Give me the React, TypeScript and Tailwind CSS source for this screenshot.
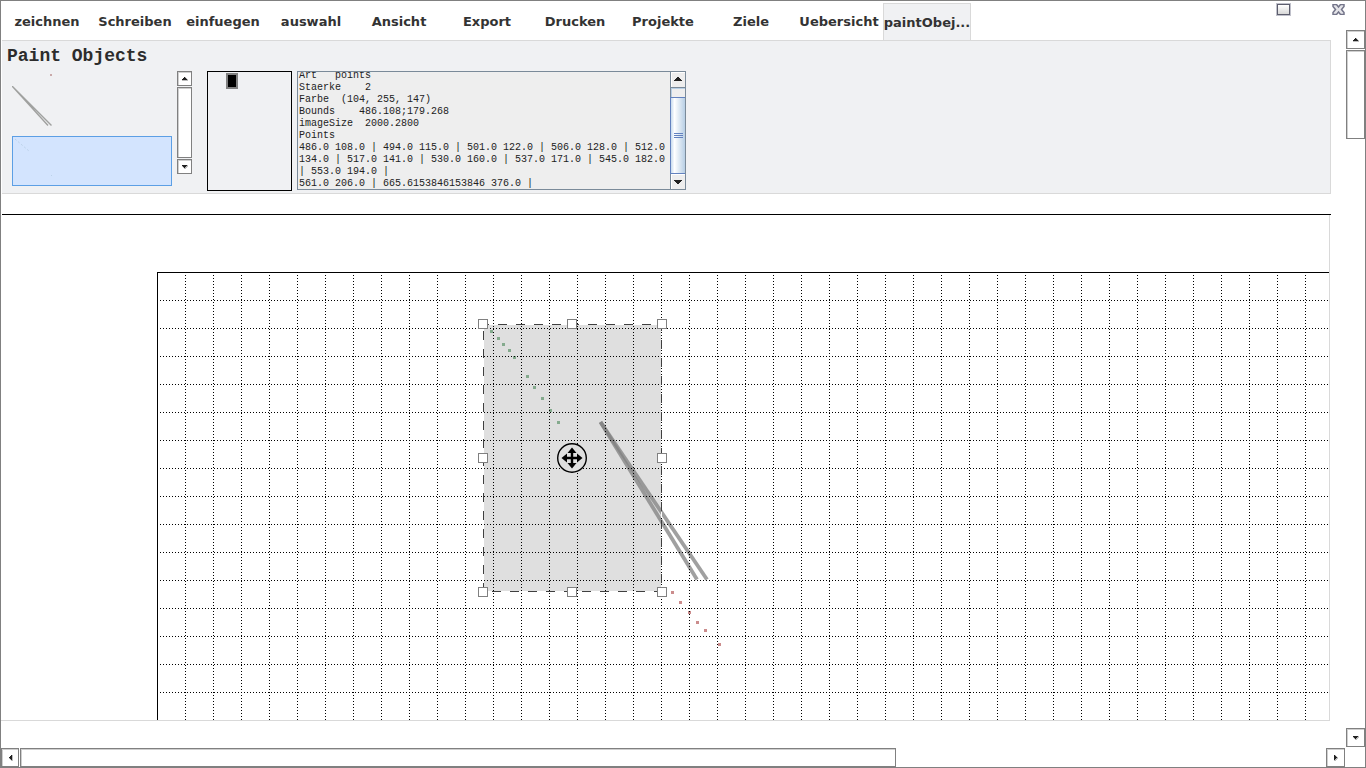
import { useLayoutEffect, useRef, useState } from "react";

const TABS = [
  "zeichnen",
  "Schreiben",
  "einfuegen",
  "auswahl",
  "Ansicht",
  "Export",
  "Drucken",
  "Projekte",
  "Ziele",
  "Uebersicht",
  "paintObej...",
];

const INFO = [
  "Art   points",
  "Staerke    2",
  "Farbe  (104, 255, 147)",
  "Bounds    486.108;179.268",
  "imageSize  2000.2800",
  "Points",
  "486.0 108.0 | 494.0 115.0 | 501.0 122.0 | 506.0 128.0 | 512.0",
  "134.0 | 517.0 141.0 | 530.0 160.0 | 537.0 171.0 | 545.0 182.0",
  "| 553.0 194.0 |",
  "561.0 206.0 | 665.6153846153846 376.0 |",
].join("\n");

type Direction = "up" | "down" | "left" | "right";

const ARROWS: Record<Direction, string> = {
  up: "M2 6V5h1V4h1V3h1v1h1v1h1v1z",
  down: "M2 3v1h1v1h1v1h1V5h1V4h1V3z",
  left: "M6 2v5H5V6H4V5H3V4h1V3h1V2z",
  right: "M3 2v5h1V6h1V5h1V4H5V3H4V2z",
};

function Arrow({ dir }: { dir: Direction }) {
  return (
    <svg width="9" height="9" viewBox="0 0 9 9" shapeRendering="crispEdges">
      <path d={ARROWS[dir]} fill="#202020" stroke="#202020" strokeOpacity="0.3" />
    </svg>
  );
}

function ScrollButton({ dir, size }: { dir: Direction; size: string }) {
  return (
    <button
      aria-label={`Scroll ${dir}`}
      className={`flex shrink-0 items-center justify-center border border-[#808080] bg-white shadow-[inset_1px_1px_0_#cfcfcf] ${size}`}
    >
      <Arrow dir={dir} />
    </button>
  );
}

function Tabs() {
  const [active, setActive] = useState(TABS.length - 1);
  return (
    <div className="flex h-10 shrink-0 pt-[2px] pl-[2px]">
      <div role="tablist" className="flex">
        {TABS.map((tab, i) => (
          <button
            key={tab}
            role="tab"
            aria-selected={i === active}
            onClick={() => setActive(i)}
            className={`flex h-[38px] w-[88px] shrink-0 items-center justify-center border text-[13px] font-bold whitespace-nowrap text-[#333333] ${
              i === active
                ? "border-[#d9d9d9] border-b-[#f0f1f3] bg-[#f0f1f3] pt-px"
                : "border-transparent"
            }`}
          >
            {tab}
          </button>
        ))}
      </div>
      <button aria-label="Maximize" className="mr-10 ml-auto flex h-[14px]">
        <svg width="15" height="13" viewBox="0 0 15 13">
          <defs>
            <linearGradient id="maxFill" x1="0" y1="0" x2="0" y2="1">
              <stop offset="0" stopColor="#ffffff" />
              <stop offset="1" stopColor="#d8d8d8" />
            </linearGradient>
          </defs>
          <rect width="15" height="13" fill="#c0c1cb" />
          <rect x="1" y="1" width="13" height="11" fill="#5c5d6d" />
          <rect x="2" y="2" width="11" height="9" fill="url(#maxFill)" />
        </svg>
      </button>
    </div>
  );
}

function ObjectList() {
  return (
    <div className="flex h-[115px] gap-[5px]">
      <ul className="flex w-40 flex-col justify-end overflow-hidden">
        <li className="h-[50px] shrink-0">
          <svg width="160" height="50">
            <rect x="38" y="38" width="2" height="2" fill="#c9a9a9" />
          </svg>
        </li>
        <li className="h-[50px] shrink-0">
          <svg width="160" height="50" fill="none" stroke="#a0a19f" strokeWidth="1.4">
            <path d="M0 0 36 39.500M0 0 39.500 39.500" />
          </svg>
        </li>
        <li className="h-[50px] shrink-0 border border-[#5c9fe5] bg-[#d3e4fe]">
          <svg width="158" height="48" stroke="#bcd2e9">
            <path d="M2 2 16 14" strokeDasharray="2 2" />
            <path d="M38 38.500h1" />
          </svg>
        </li>
      </ul>
      <div className="flex flex-col gap-px">
        <ScrollButton dir="up" size="h-[15px] w-[15px]" />
        <div className="h-[71px] w-[15px] border border-[#808080] bg-white shadow-[inset_1px_1px_0_#cfcfcf]" />
        <ScrollButton dir="down" size="h-[15px] w-[15px]" />
      </div>
    </div>
  );
}

function InfoPanel() {
  const ref = useRef<HTMLTextAreaElement>(null);
  useLayoutEffect(() => {
    if (ref.current) ref.current.scrollTop = 2;
  }, []);
  return (
    <div className="ml-[5px] flex h-[119px] w-[389px] border border-[#7a8a99] bg-[#eeeeee]">
      <textarea
        ref={ref}
        readOnly
        aria-label="Object properties"
        value={INFO}
        className="block h-full min-w-0 flex-1 resize-none overflow-hidden bg-transparent pl-px font-['Liberation_Mono',monospace] text-[10px] leading-3 whitespace-pre text-[#222222] outline-none"
      />
      <div className="flex w-[15px] flex-col border-l border-[#7a8a99]">
        <button
          aria-label="Scroll text up"
          className="flex h-4 items-center justify-center border-b border-[#7a8a99] pb-px shadow-[inset_1px_1px_0_#ffffff]"
        >
          <svg width="8" height="4" shapeRendering="crispEdges">
            <path d="M0 4V3h1V2h1V1h1V0h2v1h1v1h1v1h1v1z" fill="#222222" />
          </svg>
        </button>
        <div className="h-[9px] border-t border-l border-[#b8cfe5]" />
        <div className="-ml-px flex flex-1 flex-col items-center justify-center gap-px border border-r-0 border-[#6382bf] bg-linear-to-r from-[#c8dbee] via-white via-25% to-[#b8cfe5]">
          <span className="h-px w-[9px] bg-[#6382bf]" />
          <span className="h-px w-[9px] bg-[#6382bf]" />
          <span className="h-px w-[9px] bg-[#6382bf]" />
        </div>
        <button
          aria-label="Scroll text down"
          className="flex h-[15px] items-center justify-center shadow-[inset_1px_1px_0_#ffffff]"
        >
          <svg width="8" height="4" shapeRendering="crispEdges">
            <path d="M0 0v1h1v1h1v1h1v1h2V3h1V2h1V1h1V0z" fill="#222222" />
          </svg>
        </button>
      </div>
    </div>
  );
}

function Ribbon() {
  return (
    <section className="-mt-px ml-px h-[154px] shrink-0 border-t border-r border-b border-[#d9d9d9] bg-[#f0f1f3] pl-[5px]">
      <h1 className="h-[30px] pt-[3px] font-['Liberation_Mono',monospace] text-[18px] leading-6 font-bold text-[#2c2c2c]">
        Paint Objects
      </h1>
      <div className="flex items-start pl-[5px]">
        <ObjectList />
        <div className="ml-[15px] h-30 w-[85px] border border-black pt-px pl-[18px]">
          <div className="h-4 w-3 border-2 border-[#808080] bg-black" />
        </div>
        <InfoPanel />
      </div>
    </section>
  );
}

const GREEN = [
  [333, 58], [340, 65], [345, 71], [351, 77], [356, 84],
  [369, 103], [376, 114], [384, 125], [392, 137], [400, 149],
];
const RED = [[514, 319], [522, 329], [531, 339], [539, 349], [547, 357], [561, 371]];
const HANDLES = [
  [326, 52], [415, 52], [505, 52],
  [326, 186], [505, 186],
  [326, 320], [415, 320], [505, 320],
];
const PAGE_W = 2000;
const PAGE_H = 2800;
const CELL = 28;

function Drawing() {
  const cols = Array.from({ length: Math.floor(PAGE_W / CELL) }, (_, i) => (i + 1) * CELL);
  const rows = Array.from({ length: Math.floor(PAGE_H / CELL) }, (_, i) => (i + 1) * CELL);
  return (
    <svg className="block h-full w-full" role="img" aria-label="Drawing">
      <g transform="translate(156 57)">
        <rect x="327" y="53" width="177" height="266" fill="#dfdfdf" />
        <g stroke="#808080" strokeOpacity="0.75" strokeWidth="3.800" fill="none">
          <path d="M443.500 150 540 307.500" />
          <path d="M443.500 150 550 307.500" />
        </g>
        <g shapeRendering="crispEdges">
          {GREEN.map(([x, y]) => (
            <rect key={x} x={x} y={y} width="3" height="3" fill="#84aa8d" />
          ))}
          {RED.map(([x, y]) => (
            <rect key={x} x={x} y={y} width="3" height="3" fill="#cb8c8c" />
          ))}
          <g stroke="#000000" transform="translate(.5 .5)" fill="none">
            <path d={`M0 ${PAGE_H}V0H${PAGE_W}`} />
            <g strokeDasharray="1 2">
              {cols.map((x) => (
                <path key={x} d={`M${x} 2.500V${PAGE_H}`} />
              ))}
              {rows.map((y) => (
                <path key={y} d={`M2.500 ${y}H${PAGE_W}`} />
              ))}
            </g>
          </g>
          <path d="M504.500 240v6" stroke="#ffffff" />
          <g stroke="#404040" strokeDasharray="9 9">
            <path d="M323 52.500H504" />
            <path d="M335 319.500H504" />
            <path d="M326.500 59V320" />
            <path d="M504.500 50V320" />
          </g>
          {HANDLES.map(([x, y]) => (
            <rect
              key={`${x}-${y}`}
              x={x - 4.5}
              y={y - 4.5}
              width="9"
              height="9"
              fill="#ffffff"
              stroke="#808080"
            />
          ))}
        </g>
        <g transform="translate(415 186)">
          <circle r="14.300" fill="#dfdfdf" stroke="#000000" strokeWidth="1.400" />
          <path
            d="M0-10.500 4.500-5H1.200V-1.200H5V-4.500L10.500 0 5 4.500V1.200H1.200V5H4.500L0 10.500-4.500 5H-1.200V1.200H-5V4.500L-10.500 0-5-4.500V-1.200H-1.200V-5H-4.500Z"
            fill="#000000"
          />
        </g>
      </g>
    </svg>
  );
}

export default function App() {
  return (
    <div className="flex h-screen flex-col overflow-hidden border border-[#808080] bg-white font-['DejaVu_Sans',sans-serif]">
      <div className="flex min-h-0 flex-1">
        <main className="flex min-w-0 flex-1 flex-col">
          <Tabs />
          <Ribbon />
          <div className="mt-5 ml-px h-px shrink-0 bg-black" />
          <div className="mr-px mb-[26px] min-h-0 flex-1 border-r border-b border-[#d9d9d9]">
            <Drawing />
          </div>
        </main>
        <aside className="flex w-[34px] shrink-0 flex-col">
          <button aria-label="Close" className="flex h-[29px] items-start pt-[3px] pl-px">
            <svg width="13" height="11" viewBox="0 0 13 11">
              <path
                d="M1 .5H4.500L6.500 3 8.500.5H12V2.500L9.500 5.500 12 8.500V10.500H8.500L6.500 8 4.500 10.500H1V8.500L3.500 5.500 1 2.500Z"
                fill="#e4e4e8"
                stroke="#74758a"
                strokeWidth="1.500"
              />
            </svg>
          </button>
          <div className="flex flex-1 flex-col items-end gap-px">
            <ScrollButton dir="up" size="h-[19px] w-[19px]" />
            <div className="h-[89px] w-[19px] border border-[#808080] shadow-[inset_1px_1px_0_#cfcfcf]" />
            <div className="flex-1" />
            <ScrollButton dir="down" size="h-[19px] w-[19px]" />
          </div>
        </aside>
      </div>
      <div className="mt-px flex h-[19px] shrink-0 gap-px">
        <ScrollButton dir="left" size="h-[19px] w-[18px]" />
        <div className="flex-[671] border border-[#808080] shadow-[inset_1px_1px_0_#cfcfcf]" />
        <div className="flex-[329]" />
        <ScrollButton dir="right" size="mr-5 h-[19px] w-[19px]" />
      </div>
    </div>
  );
}
